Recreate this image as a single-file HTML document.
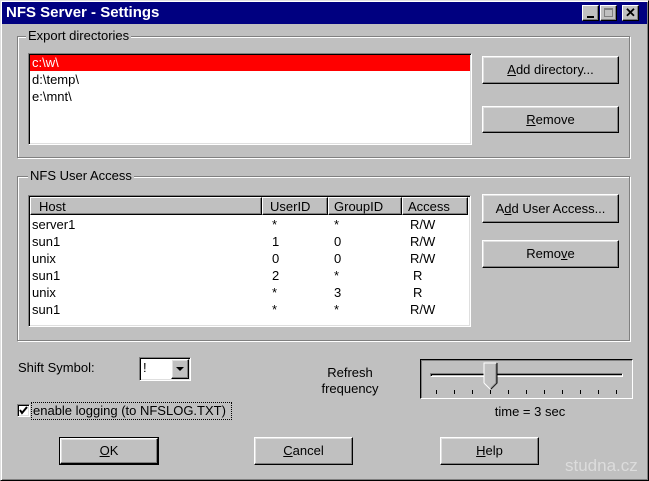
<!DOCTYPE html>
<html><head><style>
*{margin:0;padding:0;box-sizing:border-box}
body{width:649px;height:481px;background:#c0c0c0;position:relative;overflow:hidden;font-family:"Liberation Sans",Arial,sans-serif;font-size:13px;color:#000}
.a{position:absolute}
.win{left:0;top:0;width:649px;height:481px;border:1px solid;border-color:#dfdfdf #000 #000 #dfdfdf;box-shadow:inset 1px 1px #fff,inset -1px -1px #808080}
.title{left:2px;top:2px;width:645px;height:22px;background:#000080;color:#fff;font-weight:bold;font-size:15px;line-height:22px;padding-left:4px}
.tb{top:5px;width:17px;height:16px;background:#c0c0c0;border:1px solid;border-color:#fff #000 #000 #fff;box-shadow:inset -1px -1px #808080}
.grp{border:1px solid #808080;box-shadow:1px 1px #fff,inset 1px 1px #fff}
.lbl{background:#c0c0c0;padding:0 2px;line-height:14px}
.sunk{border:1px solid;border-color:#808080 #fff #fff #808080;box-shadow:inset 1px 1px #000,inset -1px -1px #dfdfdf;background:#fff}
.btn{border:1px solid;border-color:#fff #000 #000 #fff;box-shadow:inset -1px -1px #808080,inset 1px 1px #dfdfdf;text-align:center;background:#c0c0c0}
.row{left:2px;height:17px;line-height:17px;width:438px}
.row span{position:absolute}
.hd{top:197px;height:18px;line-height:17px;background:#c0c0c0;border:1px solid;border-color:#fff #000 #000 #fff;box-shadow:inset -1px -1px #808080;padding-left:8px}
.tick{top:390px;width:1px;height:4px;background:#000}
</style></head><body>
<div class="a win"></div>
<div class="a title">NFS Server - Settings</div>
<div class="a tb" style="left:582px"><div class="a" style="left:4px;top:10px;width:7px;height:2px;background:#000"></div></div>
<div class="a tb" style="left:600px"><div class="a" style="left:3px;top:2px;width:9px;height:9px;border:1px solid #808080;border-top-width:2px"></div></div>
<div class="a tb" style="left:622px;font-weight:bold;font-size:13px;line-height:13px;text-align:center">✕</div>

<div class="a grp" style="left:17px;top:36px;width:613px;height:122px"></div>
<div class="a lbl" style="left:26px;top:29px">Export directories</div>
<div class="a sunk" style="left:28px;top:53px;width:444px;height:92px"></div>
<div class="a" style="left:30px;top:55px;width:440px;height:16px;background:#f00;color:#fff;line-height:16px;padding-left:2px">c:\w\</div>
<div class="a" style="left:32px;top:71px;line-height:17px">d:\temp\<br>e:\mnt\</div>
<div class="a btn" style="left:482px;top:56px;width:137px;height:28px;line-height:26px"><u>A</u>dd directory...</div>
<div class="a btn" style="left:482px;top:106px;width:137px;height:27px;line-height:25px"><u>R</u>emove</div>

<div class="a grp" style="left:17px;top:176px;width:613px;height:165px"></div>
<div class="a lbl" style="left:28px;top:169px">NFS User Access</div>
<div class="a sunk" style="left:28px;top:195px;width:443px;height:132px"></div>
<div class="a hd" style="left:30px;width:232px">Host</div>
<div class="a hd" style="left:262px;width:66px;padding-left:7px">UserID</div>
<div class="a hd" style="left:328px;width:74px;padding-left:5px">GroupID</div>
<div class="a hd" style="left:402px;width:66px;padding-left:5px">Access</div>
<div class="a" style="left:30px;top:216px;width:438px;height:109px;line-height:17px">
<div class="a row" style="top:0"><span style="left:0">server1</span><span style="left:240px">*</span><span style="left:302px">*</span><span style="left:378px">R/W</span></div>
<div class="a row" style="top:17px"><span style="left:0">sun1</span><span style="left:240px">1</span><span style="left:302px">0</span><span style="left:378px">R/W</span></div>
<div class="a row" style="top:34px"><span style="left:0">unix</span><span style="left:240px">0</span><span style="left:302px">0</span><span style="left:378px">R/W</span></div>
<div class="a row" style="top:51px"><span style="left:0">sun1</span><span style="left:240px">2</span><span style="left:302px">*</span><span style="left:381px">R</span></div>
<div class="a row" style="top:68px"><span style="left:0">unix</span><span style="left:240px">*</span><span style="left:302px">3</span><span style="left:381px">R</span></div>
<div class="a row" style="top:85px"><span style="left:0">sun1</span><span style="left:240px">*</span><span style="left:302px">*</span><span style="left:378px">R/W</span></div>
</div>
<div class="a btn" style="left:482px;top:194px;width:137px;height:29px;line-height:27px">A<u>d</u>d User Access...</div>
<div class="a btn" style="left:482px;top:240px;width:137px;height:28px;line-height:26px">Remo<u>v</u>e</div>

<div class="a" style="left:18px;top:360px">Shift Symbol:</div>
<div class="a sunk" style="left:139px;top:357px;width:52px;height:24px;line-height:20px;padding-left:3px">!</div>
<div class="a btn" style="left:171px;top:359px;width:18px;height:20px"><div class="a" style="left:4px;top:7px;border-left:4px solid transparent;border-right:4px solid transparent;border-top:4px solid #000"></div></div>
<div class="a" style="left:300px;top:365px;width:100px;text-align:center;line-height:16px">Refresh<br>frequency</div>

<div class="a" style="left:420px;top:359px;width:213px;height:40px;border:1px solid;border-color:#000 #fff #fff #000;box-shadow:1px 1px #808080 inset"></div>
<div class="a" style="left:430px;top:373px;width:193px;height:4px;border:1px solid;border-color:#808080 #fff #fff #808080;box-shadow:inset 1px 1px #000"></div>
<svg class="a" style="left:483px;top:362px" width="16" height="30"><path d="M1 1H14V21L8 27L1 20Z" fill="#c0c0c0"/><path d="M1 21V1H13" stroke="#fff" fill="none"/><path d="M14 1V21L8 27" stroke="#000" fill="none"/><path d="M1 21L7 27" stroke="#fff" fill="none"/><path d="M13 2V21L8 26" stroke="#808080" fill="none"/></svg>
<div class="a tick" style="left:436px"></div><div class="a tick" style="left:454px"></div><div class="a tick" style="left:472px"></div><div class="a tick" style="left:490px"></div><div class="a tick" style="left:508px"></div><div class="a tick" style="left:526px"></div><div class="a tick" style="left:544px"></div><div class="a tick" style="left:562px"></div><div class="a tick" style="left:580px"></div><div class="a tick" style="left:598px"></div><div class="a tick" style="left:616px"></div>
<div class="a" style="left:470px;top:404px;width:120px;text-align:center">time = 3 sec</div>

<div class="a sunk" style="left:17px;top:404px;width:13px;height:13px"></div>
<svg class="a" style="left:19px;top:406px" width="9" height="9"><path d="M1 4L3 7L8 1" stroke="#000" stroke-width="2" fill="none"/></svg>
<div class="a" style="left:31px;top:402px;width:201px;height:18px;border:1px dotted #000;line-height:16px;padding-left:1px">enable logging (to NFSLOG.TXT)</div>

<div class="a" style="left:59px;top:437px;width:100px;height:28px;border:1px solid #000"></div>
<div class="a btn" style="left:60px;top:438px;width:98px;height:26px;line-height:24px"><u>O</u>K</div>
<div class="a btn" style="left:254px;top:437px;width:99px;height:28px;line-height:26px"><u>C</u>ancel</div>
<div class="a btn" style="left:440px;top:437px;width:99px;height:28px;line-height:26px"><u>H</u>elp</div>
<div class="a" style="left:565px;top:456px;font-size:17px;color:#dcdcdc">studna.cz</div>
</body></html>
